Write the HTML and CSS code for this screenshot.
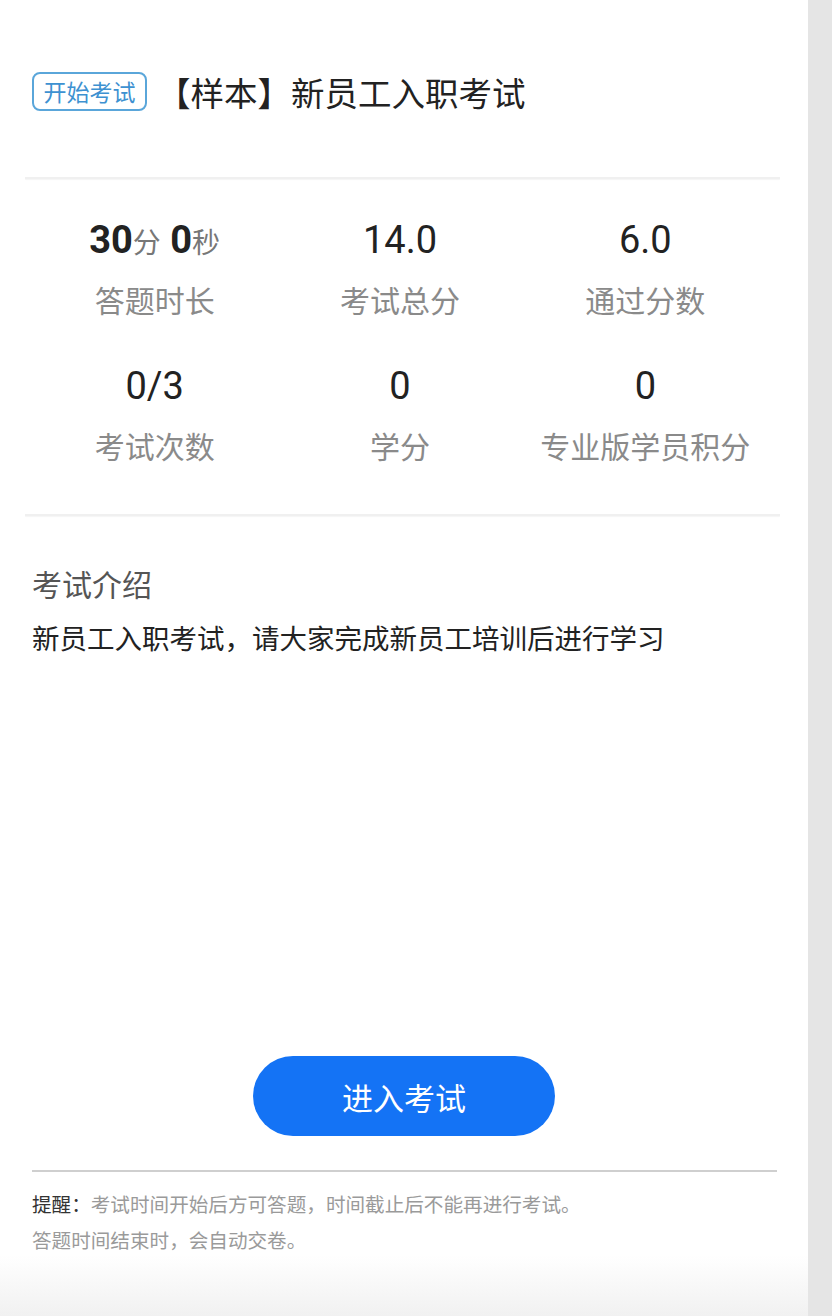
FILE: index.html
```html
<!DOCTYPE html>
<html lang="zh-CN">
<head>
<meta charset="utf-8">
<title>【样本】新员工入职考试</title>
<link rel="stylesheet" href="styles.css">
</head>
<body>
<div class="page">
  <div class="header">
    <span class="badge">开始考试</span>
    <h1 class="title">【样本】新员工入职考试</h1>
  </div>
  <div class="divider"></div>
  <div class="stats">
    <div class="stat">
      <div class="value"><b>30</b><span class="unit">分</span> <b>0</b><span class="unit">秒</span></div>
      <div class="label">答题时长</div>
    </div>
    <div class="stat">
      <div class="value">14.0</div>
      <div class="label">考试总分</div>
    </div>
    <div class="stat">
      <div class="value">6.0</div>
      <div class="label">通过分数</div>
    </div>
    <div class="stat">
      <div class="value">0/3</div>
      <div class="label">考试次数</div>
    </div>
    <div class="stat">
      <div class="value">0</div>
      <div class="label">学分</div>
    </div>
    <div class="stat">
      <div class="value">0</div>
      <div class="label">专业版学员积分</div>
    </div>
  </div>
  <div class="divider divider-low"></div>
  <div class="intro">
    <h2 class="intro-title">考试介绍</h2>
    <p class="intro-text">新员工入职考试，请大家完成新员工培训后进行学习</p>
  </div>
  <div class="action">
    <button class="enter-btn">进入考试</button>
  </div>
  <div class="notice">
    <p><span class="notice-key">提醒：</span>考试时间开始后方可答题，时间截止后不能再进行考试。</p>
    <p>答题时间结束时，会自动交卷。</p>
  </div>
</div>
<div class="rail"></div>
</body>
</html>
```

FILE: styles.css
```css
* { box-sizing: border-box; }
html, body { margin: 0; padding: 0; }
body {
  display: flex;
  width: 832px;
  height: 1316px;
  overflow: hidden;
  background: #e6e6e6;
  font-family: Roboto, "Noto Sans CJK SC", sans-serif;
  color: #222;
}
.page {
  width: 808px;
  height: 1316px;
  background: linear-gradient(to bottom, #ffffff 0, #ffffff 1255px, #f1f1f1 1316px);
  display: flex;
  flex-direction: column;
}
.rail {
  width: 24px;
  background: #e5e5e5;
}
.header {
  display: flex;
  align-items: center;
  padding: 72px 0 0 32px;
  height: 111px;
}
.badge {
  display: inline-flex;
  align-items: center;
  justify-content: center;
  width: 115px;
  height: 39px;
  border: 2px solid #5aa6da;
  border-radius: 8px;
  color: #3d91d1;
  font-family: "Noto Sans CJK SC", sans-serif;
  font-size: 23px;
  line-height: 1;
}
.title {
  margin: 0 0 0 10px;
  font-family: "Noto Sans CJK SC", sans-serif;
  font-weight: 400;
  font-size: 33.5px;
  line-height: 1;
  color: #222;
}
.divider {
  margin: 66px 28px 0 25px;
  height: 2px;
  background: #f0f0f0;
  box-shadow: 0 1px 1px rgba(0,0,0,0.04);
}
.divider-low { margin-top: 49px; }
.stats {
  display: grid;
  grid-template-columns: repeat(3, 1fr);
  padding: 0 40px 0 32px;
  margin-top: 40px;
  row-gap: 46px;
}
.stat {
  display: flex;
  flex-direction: column;
  align-items: center;
}
.value {
  height: 42px;
  font-size: 38px;
  line-height: 42px;
  color: #222;
}
.value b { font-weight: 700; }
.unit {
  font-family: "Noto Sans CJK SC", sans-serif;
  font-size: 28px;
  color: #777;
}
.label {
  margin-top: 18px;
  font-family: "Noto Sans CJK SC", sans-serif;
  font-size: 30px;
  line-height: 40px;
  color: #8a8a8a;
}
.intro {
  padding: 0 32px;
  margin-top: 47px;
}
.intro-title {
  margin: 0;
  font-family: "Noto Sans CJK SC", sans-serif;
  font-weight: 400;
  font-size: 30px;
  line-height: 40px;
  color: #555;
}
.intro-text {
  margin: 14px 0 0;
  font-family: "Noto Sans CJK SC", sans-serif;
  font-size: 27.5px;
  line-height: 40px;
  color: #222;
}
.action {
  display: flex;
  justify-content: center;
  margin-top: 399px;
}
.enter-btn {
  width: 302px;
  height: 80px;
  border: none;
  border-radius: 40px;
  background: #1473f5;
  color: #fff;
  font-family: "Noto Sans CJK SC", sans-serif;
  font-size: 31px;
  padding: 0;
}
.notice {
  margin: 34px 31px 0 32px;
  padding-top: 14px;
  border-top: 2px solid #cfcfcf;
}
.notice p {
  margin: 0;
  font-family: "Noto Sans CJK SC", sans-serif;
  font-size: 19.6px;
  line-height: 36px;
  color: #9a9a9a;
}
.notice-key { color: #333; }
```
